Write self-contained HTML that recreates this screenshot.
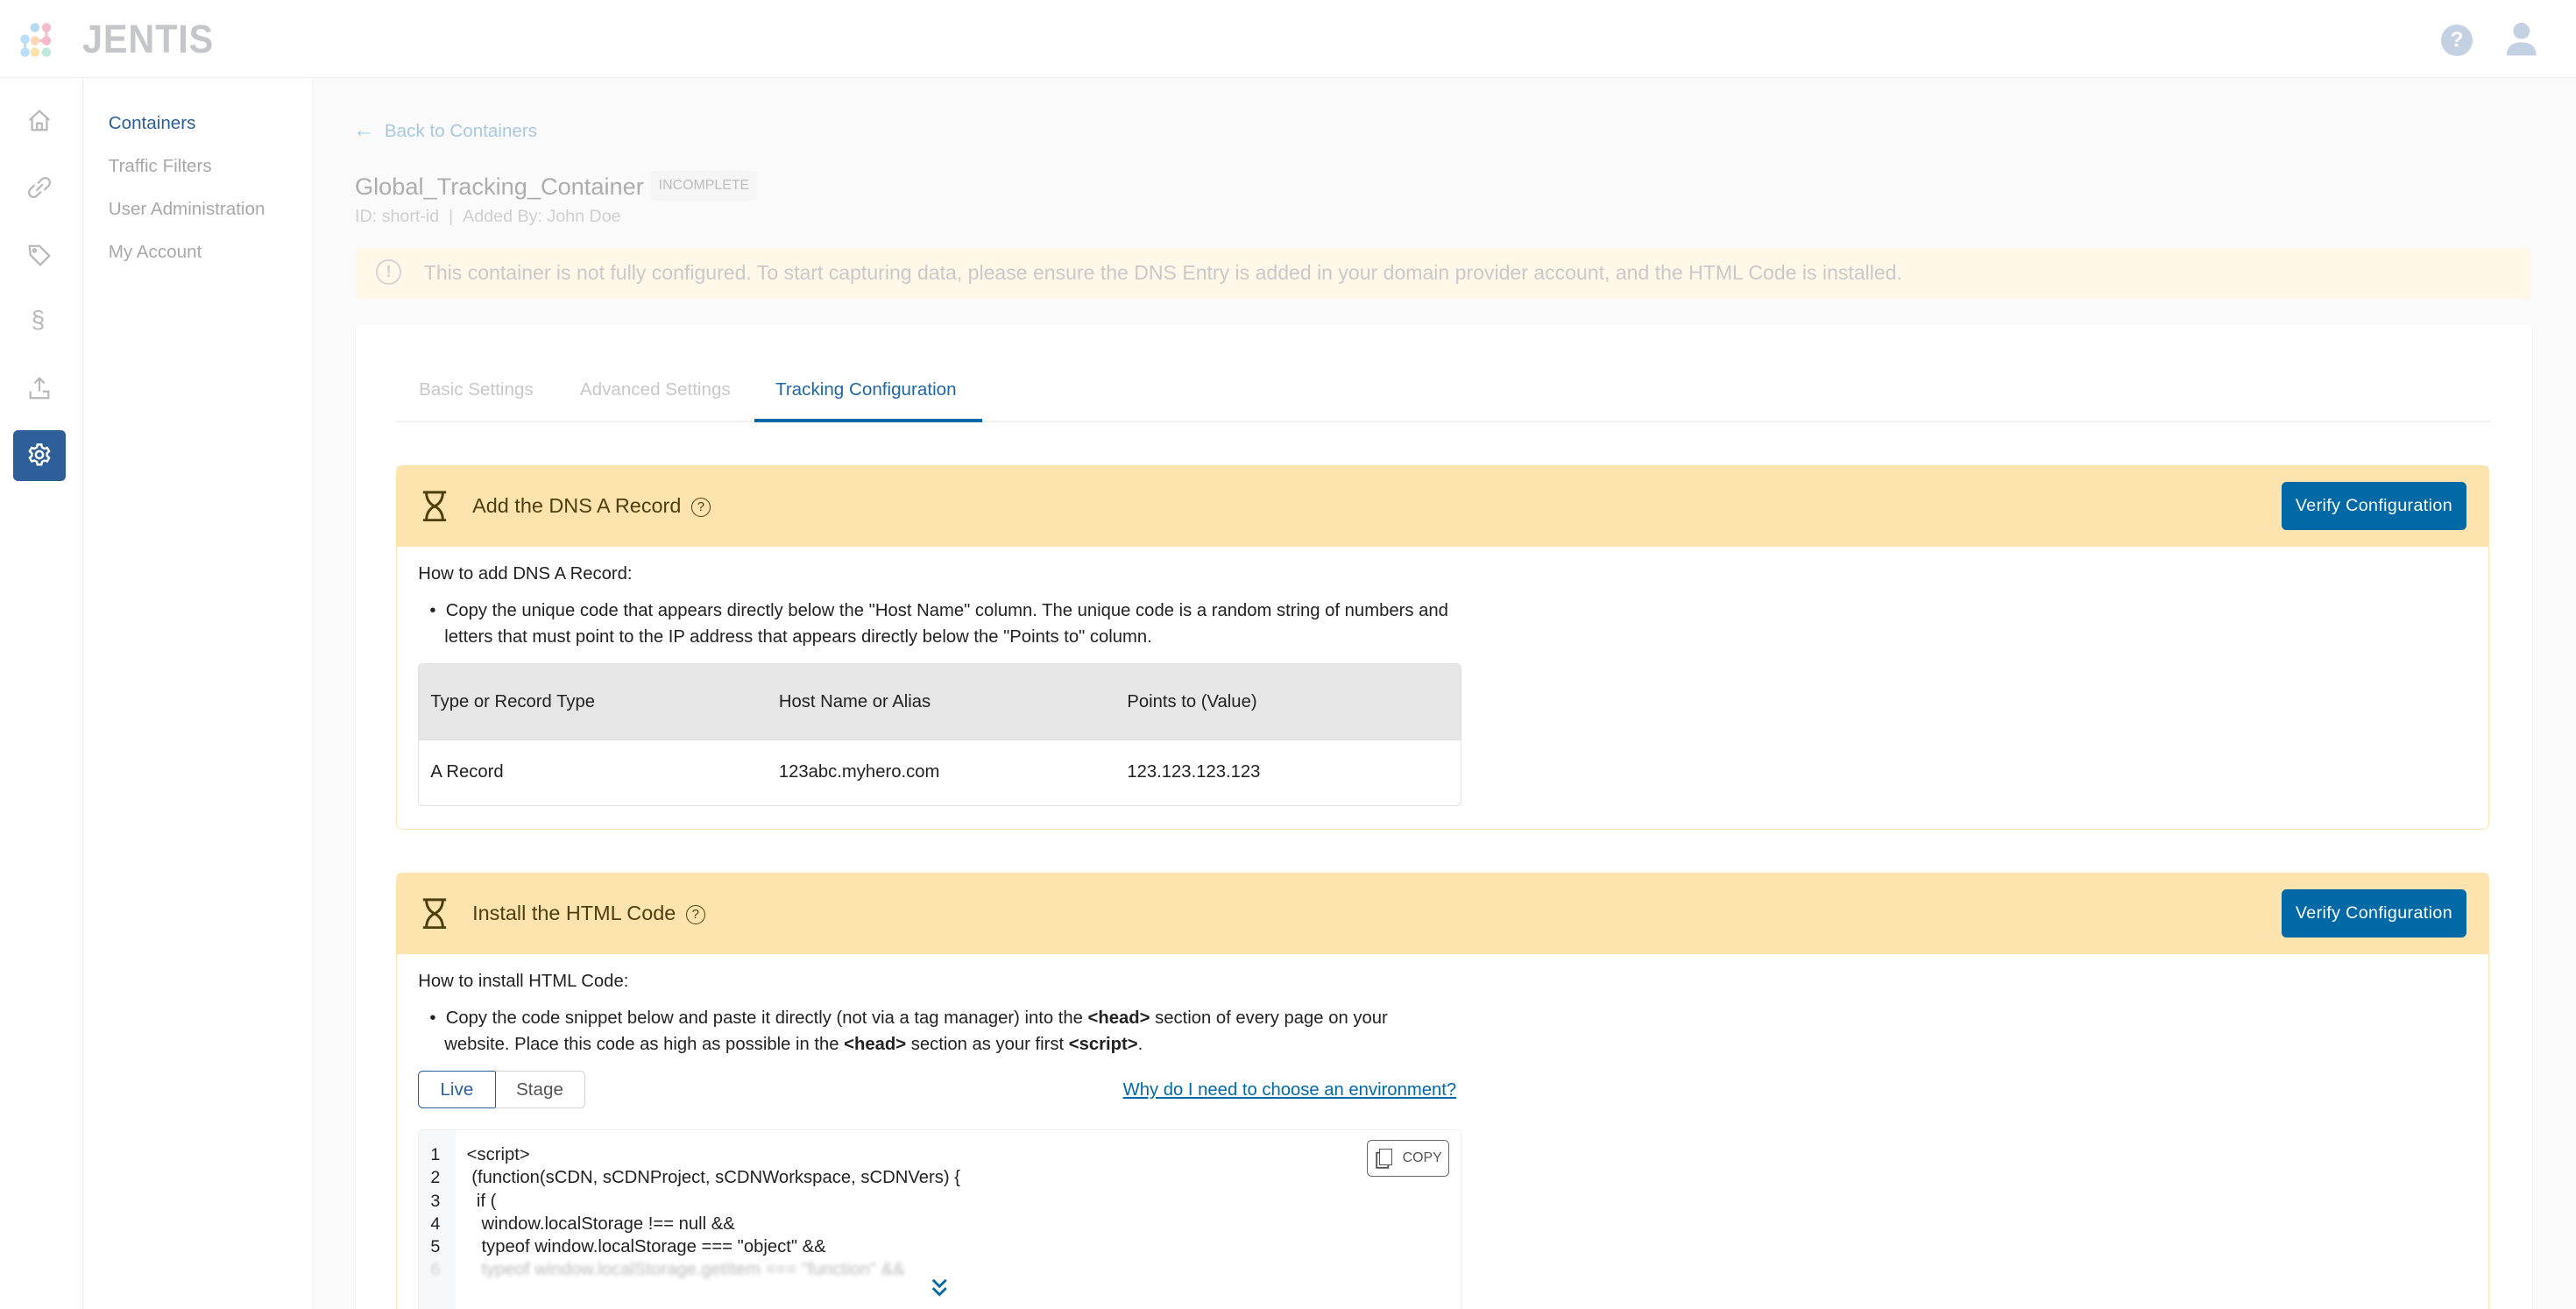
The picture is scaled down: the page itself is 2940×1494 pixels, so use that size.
<!DOCTYPE html>
<html><head><meta charset="utf-8">
<style>
html,body{margin:0;padding:0;overflow:hidden;}
body{background:#fafafa;}
#w{width:1568px;height:797px;zoom:1.875;overflow:hidden;position:relative;background:#fafafa;font-family:"Liberation Sans",sans-serif;color:#222;}
.a{position:absolute;white-space:nowrap;}
.hdr{left:0;top:0;width:1568px;height:47px;background:#fff;border-bottom:1px solid #f0f0f0;}
.rail{left:0;top:48px;width:50px;height:749px;background:#fff;border-right:1px solid #f0f0f0;}
.nav2{left:51px;top:48px;width:139px;height:749px;background:#fff;border-right:1px solid #f3f3f3;}
.nav2 div{position:absolute;left:15px;font-size:11px;color:#a8a8a8;}
.ic{position:absolute;left:16px;width:16px;height:16px;}
.card{left:216px;top:197px;width:1325px;height:620px;background:#fff;border-radius:4px;border:1px solid #f3f3f3;}
.sec{position:absolute;left:241px;width:1273px;border:1px solid #fde3ae;border-radius:4px;background:#fff;}
.sh{position:absolute;left:0;top:0;width:100%;height:49px;background:#fde3ae;}
.sh .t{position:absolute;left:46px;top:17px;font-size:12.5px;color:#4d3f0e;}
.btn{position:absolute;right:13px;top:10px;width:113px;height:29px;background:#0069a6;border-radius:3px;color:#fff;font-size:10.5px;text-align:center;line-height:29px;letter-spacing:.2px;}
.q{display:inline-block;width:11px;height:11px;border:1px solid #4d3f0e;border-radius:50%;font-size:8px;text-align:center;line-height:11px;margin-left:6px;vertical-align:1px;}
.txt{font-size:10.8px;color:#222;}
</style></head><body><div id="w">
<div class="a hdr"></div>
<svg class="a" style="left:12px;top:13px" width="22" height="23" viewBox="0 0 22 23">
<line x1="3" y1="11" x2="3" y2="19" stroke="#bde0f5" stroke-width="1.8"/>
<line x1="9" y1="12" x2="16" y2="12" stroke="#f2c4cf" stroke-width="1.8"/>
<line x1="16" y1="4" x2="16" y2="12" stroke="#f2c4cf" stroke-width="1.8"/>
<circle cx="9" cy="4" r="2.8" fill="#b9d8ee"/><circle cx="16" cy="4" r="2.8" fill="#f2bccb"/>
<circle cx="3" cy="11" r="2.8" fill="#b9def5"/><circle cx="9" cy="12" r="2.8" fill="#fbd7b8"/><circle cx="16" cy="12" r="2.8" fill="#f2bccb"/>
<circle cx="3" cy="19" r="2.8" fill="#b9def5"/><circle cx="9" cy="19" r="2.8" fill="#fbe0a8"/><circle cx="16" cy="19" r="2.8" fill="#bfe8dc"/>
</svg>
<div class="a" style="left:50px;top:10px;font-size:24px;font-weight:bold;color:#c4c6c9;letter-spacing:0.5px;transform:scaleX(0.92);transform-origin:left;">JENTIS</div>
<div class="a" style="left:1486px;top:15px;width:19px;height:19px;border-radius:50%;background:#c3d1e3;color:#fff;font-size:13px;font-weight:bold;text-align:center;line-height:19px;">?</div>
<svg class="a" style="left:1525px;top:13px" width="20" height="22" viewBox="0 0 20 22"><circle cx="10" cy="6" r="5" fill="#c3d1e3"/><path d="M1 21 Q1 13 10 13 Q19 13 19 21 Z" fill="#c3d1e3"/></svg>

<div class="a rail">
<svg class="ic" style="top:17px" viewBox="0 0 16 16" fill="none" stroke="#b8b8b8" stroke-width="1.2"><path d="M2 8 L8 2.5 L14 8 M3.5 7 V14 H12.5 V7 M6.5 14 V10 H9.5 V14"/></svg>
<svg class="ic" style="top:58px" viewBox="0 0 16 16" fill="none" stroke="#b8b8b8" stroke-width="1.2"><path d="M7 5.5 L9.5 3 A2.8 2.8 0 0 1 13.5 7 L11 9.5 M9 10.5 L6.5 13 A2.8 2.8 0 0 1 2.5 9 L5 6.5 M6 10 L10 6"/></svg>
<svg class="ic" style="top:99px" viewBox="0 0 16 16" fill="none" stroke="#b8b8b8" stroke-width="1.2"><path d="M2 2.5 H8 L14 8.5 L8.5 14 L2.5 8 Z"/><circle cx="5" cy="5.3" r=".9"/></svg>
<div class="a" style="left:19px;top:138px;font-size:15px;color:#b8b8b8;">§</div>
<svg class="ic" style="top:180px" viewBox="0 0 16 16" fill="none" stroke="#b8b8b8" stroke-width="1.2"><path d="M8 2 V10 M5 5 L8 2 L11 5 M2.5 10 V14 H13.5 V10 H10"/></svg>
<div class="a" style="left:8px;top:214px;width:32px;height:31px;background:#2f5f9a;border-radius:3px;"></div>
<svg class="ic" style="top:221px" viewBox="0 0 16 16" fill="none" stroke="#fff" stroke-width="1.3"><circle cx="8" cy="8" r="2.2"/><path d="M6.8 1.8h2.4l.4 1.7 1.4.8 1.7-.5 1.2 2.1-1.3 1.2v1.6l1.3 1.2-1.2 2.1-1.7-.5-1.4.8-.4 1.7H6.8l-.4-1.7-1.4-.8-1.7.5-1.2-2.1 1.3-1.2V7.1L2.1 5.9l1.2-2.1 1.7.5 1.4-.8z"/></svg>
</div>

<div class="a nav2">
<div style="top:21px;color:#2b5d98;">Containers</div>
<div style="top:47px;">Traffic Filters</div>
<div style="top:73px;">User Administration</div>
<div style="top:99px;">My Account</div>
</div>

<div class="a" style="left:215px;top:72px;font-size:11px;color:#a9c8e0;"><span style="font-size:13px">←</span> &nbsp;Back to Containers</div>
<div class="a" style="left:216px;top:105px;font-size:14.5px;color:#adadad;">Global_Tracking_Container</div>
<div class="a" style="left:396px;top:104px;width:65px;height:18px;background:#f5f5f5;border-radius:2px;font-size:8.5px;color:#bdbdbd;text-align:center;line-height:18px;">INCOMPLETE</div>
<div class="a" style="left:216px;top:126px;font-size:10.5px;color:#cfcfcf;">ID: short-id &nbsp;| &nbsp;Added By: John Doe</div>
<div class="a" style="left:216px;top:151px;width:1325px;height:31px;background:#fff7e8;border-radius:3px;"></div>
<div class="a" style="left:229px;top:158px;width:13px;height:13px;border:1.5px solid #d6d6d6;border-radius:50%;color:#d0d0d0;font-size:10px;font-weight:bold;text-align:center;line-height:13px;">!</div>
<div class="a" style="left:258px;top:159px;font-size:12.3px;color:#c9c9c9;">This container is not fully configured. To start capturing data, please ensure the DNS Entry is added in your domain provider account, and the HTML Code is installed.</div>

<div class="a card"></div>
<div class="a" style="left:255px;top:231px;font-size:11px;color:#c8c8c8;">Basic Settings</div>
<div class="a" style="left:353px;top:231px;font-size:11px;color:#c8c8c8;">Advanced Settings</div>
<div class="a" style="left:472px;top:231px;font-size:11px;color:#1f67a3;">Tracking Configuration</div>
<div class="a" style="left:241px;top:256px;width:1275px;height:1px;background:#f1f1f1;"></div>
<div class="a" style="left:459px;top:255px;width:139px;height:2px;background:#0069a6;"></div>

<div class="sec" style="top:283px;height:221px;">
<div class="sh">
<svg style="position:absolute;left:15px;top:15px" width="16" height="19" viewBox="0 0 16 19" fill="none" stroke="#4d3f0e" stroke-width="1.6"><path d="M1 1H15M1 18H15M3 1 Q3 7 8 9.5 Q13 7 13 1M3 18 Q3 12 8 9.5 Q13 12 13 18"/></svg>
<div class="t">Add the DNS A Record<span class="q">?</span></div>
<div class="btn">Verify Configuration</div>
</div>
<div class="a txt" style="left:13px;top:60px;">How to add DNS A Record:</div>
<div class="a txt" style="left:20px;top:80px;line-height:16px;">•&nbsp;&nbsp;Copy the unique code that appears directly below the "Host Name" column. The unique code is a random string of numbers and<br>&nbsp;&nbsp;&nbsp;letters that must point to the IP address that appears directly below the "Points to" column.</div>
<div class="a" style="left:13px;top:120px;width:634px;height:86px;border:1px solid #e2e2e2;border-radius:3px;background:#fff;">
<div style="position:absolute;left:0;top:0;width:100%;height:46px;background:#e6e6e6;border-bottom:1px solid #ddd;"></div>
<div class="a txt" style="left:7px;top:17px;">Type or Record Type</div>
<div class="a txt" style="left:219px;top:17px;">Host Name or Alias</div>
<div class="a txt" style="left:431px;top:17px;">Points to (Value)</div>
<div class="a txt" style="left:7px;top:60px;">A Record</div>
<div class="a txt" style="left:219px;top:60px;">123abc.myhero.com</div>
<div class="a txt" style="left:431px;top:60px;">123.123.123.123</div>
</div>
</div>

<div class="sec" style="top:531px;height:300px;">
<div class="sh">
<svg style="position:absolute;left:15px;top:15px" width="16" height="19" viewBox="0 0 16 19" fill="none" stroke="#4d3f0e" stroke-width="1.6"><path d="M1 1H15M1 18H15M3 1 Q3 7 8 9.5 Q13 7 13 1M3 18 Q3 12 8 9.5 Q13 12 13 18"/></svg>
<div class="t">Install the HTML Code<span class="q">?</span></div>
<div class="btn">Verify Configuration</div>
</div>
<div class="a txt" style="left:13px;top:60px;">How to install HTML Code:</div>
<div class="a txt" style="left:20px;top:80px;line-height:16px;">•&nbsp;&nbsp;Copy the code snippet below and paste it directly (not via a tag manager) into the <b>&lt;head&gt;</b> section of every page on your<br>&nbsp;&nbsp;&nbsp;website. Place this code as high as possible in the <b>&lt;head&gt;</b> section as your first <b>&lt;script&gt;</b>.</div>
<div class="a" style="left:13px;top:120px;width:46px;height:22px;border:1px solid #2b5d98;border-radius:3px 0 0 3px;color:#2b5d98;font-size:11px;text-align:center;line-height:22px;">Live</div>
<div class="a" style="left:60px;top:120px;width:54px;height:22px;border:1px solid #d4d4d4;border-left:none;border-radius:0 3px 3px 0;color:#555;font-size:11px;text-align:center;line-height:22px;">Stage</div>
<div class="a" style="left:442px;top:126px;font-size:10.8px;color:#0069a6;text-decoration:underline;">Why do I need to choose an environment?</div>
<div class="a" style="left:13px;top:156px;width:634px;height:140px;border:1px solid #efefef;border-radius:3px;background:#fff;overflow:hidden;">
<div style="position:absolute;left:0;top:0;width:22px;height:100%;background:#f6f9fc;"></div>
<div class="a" style="left:7px;top:8px;font-size:10.5px;line-height:14px;color:#222;">1<br>2<br>3<br>4<br>5<br><span style="color:#ccc;filter:blur(1px)">6</span></div>
<div class="a" style="left:29px;top:8px;font-size:10.8px;line-height:14px;color:#222;white-space:pre;">&lt;script&gt;
 (function(sCDN, sCDNProject, sCDNWorkspace, sCDNVers) {
  if (
   window.localStorage !== null &amp;&amp;
   typeof window.localStorage === "object" &amp;&amp;
<span style="color:#bbb;filter:blur(1.2px)">   typeof window.localStorage.getItem === "function" &amp;&amp;</span></div>
<div class="a" style="left:577px;top:6px;width:49px;height:21px;border:1px solid #666;border-radius:3px;font-size:8.5px;color:#555;line-height:21px;"><span style="display:inline-block;width:7px;height:9px;border:1px solid #555;margin:0 6px 0 7px;vertical-align:-2px;box-shadow:-2px 2px 0 -1px #fff,-2px 2px 0 0 #555;"></span>COPY</div>
<svg class="a" style="left:311px;top:89px" width="12" height="14" viewBox="0 0 12 14" fill="none" stroke="#0069a6" stroke-width="1.5"><path d="M2 2 L6 6 L10 2 M2 7 L6 11 L10 7"/></svg>
</div>
</div>
</div></body></html>
